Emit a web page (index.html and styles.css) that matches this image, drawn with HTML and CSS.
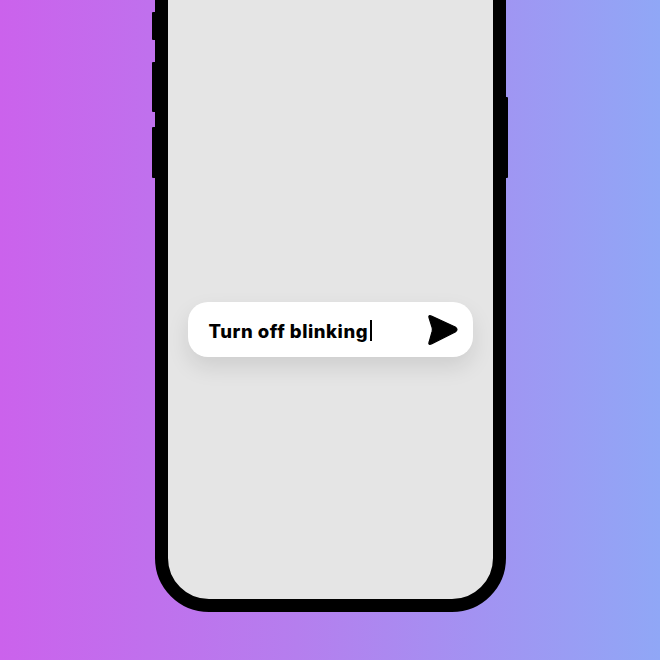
FILE: index.html
```html
<!DOCTYPE html>
<html>
<head>
<meta charset="utf-8">
<link rel="stylesheet" href="styles.css">
</head>
<body>
<div class="stage">
  <div class="phone">
    <span class="btn btn-l1"></span>
    <span class="btn btn-l2"></span>
    <span class="btn btn-l3"></span>
    <span class="btn btn-r1"></span>
    <div class="screen">
      <div class="prompt">
        <span class="prompt-text">Turn off blinking<span class="caret"></span></span>
        <svg class="send" width="34" height="34" viewBox="0 0 34 34">
          <path d="M4.2 5.2 Q2.8 1.6 6.4 3 L30.2 14 Q33.8 16.5 30.2 19 L6.4 31 Q2.8 32.4 4.2 28.8 L7.2 18.2 Q7.6 16.5 7.2 14.8 Z" fill="#000" stroke="#000" stroke-width="1.2" stroke-linejoin="round"/>
        </svg>
      </div>
    </div>
  </div>
</div>
</body>
</html>
```
FILE: styles.css
```css
html, body {
  margin: 0;
  padding: 0;
}
body {
  width: 660px;
  height: 660px;
  overflow: hidden;
  background: linear-gradient(90deg, #cb62ec 0%, #b57eee 45%, #90a7f6 100%);
  font-family: "Inter", "Liberation Sans", sans-serif;
}
.stage {
  display: flex;
  justify-content: center;
}
.phone {
  position: relative;
  width: 351px;
  height: 700px;
  margin-top: -88px;
  box-sizing: border-box;
  border: 13px solid #000;
  border-radius: 54px;
  background: #e5e5e5;
}
.btn {
  position: absolute;
  background: #000;
  border-radius: 1px;
}
.btn-l1 { left: -16px; width: 4px; top: 87px; height: 28px; }
.btn-l2 { left: -16px; width: 4px; top: 137px; height: 50px; }
.btn-l3 { left: -16px; width: 4px; top: 202px; height: 51px; }
.btn-r1 { right: -15px; width: 4px; top: 172px; height: 81px; }
.screen {
  display: flex;
  flex-direction: column;
  align-items: center;
  padding-top: 377px;
}
.prompt {
  width: 285px;
  height: 55px;
  box-sizing: border-box;
  background: #fff;
  border-radius: 20px;
  box-shadow: 0 10px 22px rgba(0, 0, 0, 0.10);
  display: flex;
  align-items: center;
  justify-content: space-between;
  padding: 0 14px 0 21px;
}
.prompt-text {
  font-size: 18.5px;
  font-weight: 800;
  color: #000;
  letter-spacing: 0.55px;
  display: flex;
  align-items: center;
  padding-top: 2px;
}
.caret {
  display: inline-block;
  width: 2px;
  height: 21px;
  background: #000;
  margin-left: 2px;
}
.send {
  display: block;
}
```
